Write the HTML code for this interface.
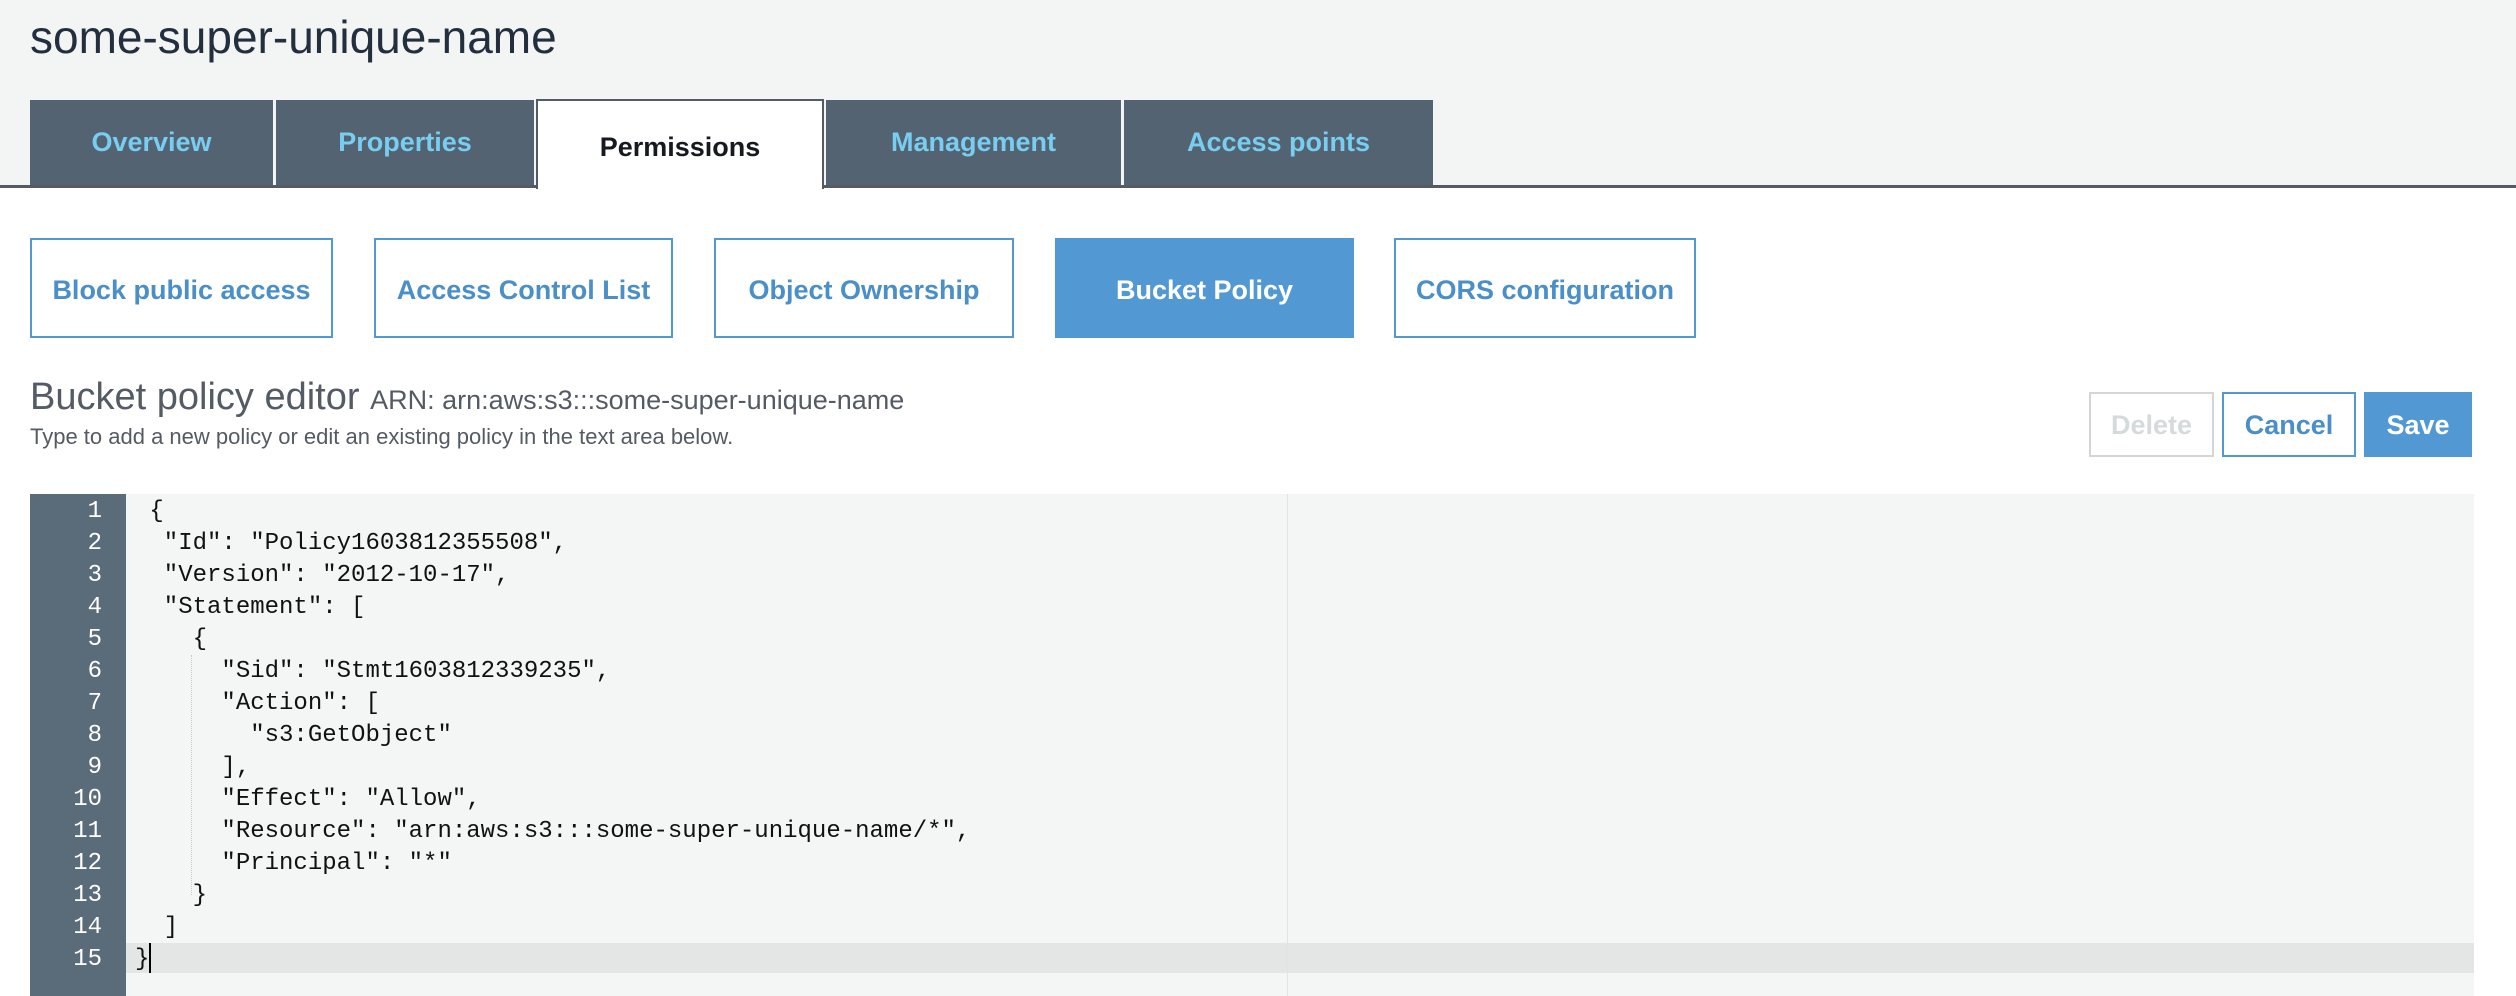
<!DOCTYPE html>
<html><head><meta charset="utf-8"><style>
*{margin:0;padding:0;box-sizing:border-box}
body{width:2516px;height:996px;overflow:hidden;background:#fff;font-family:"Liberation Sans",Arial,sans-serif;position:relative}
.hdr{position:absolute;left:0;top:0;width:2516px;height:186px;background:#f3f4f4}
.line{position:absolute;left:0;top:185px;width:2516px;height:3px;background:#545b64}
.title{position:absolute;left:30px;top:10px;font-size:46px;color:#232f3e;line-height:54px}
.tab{position:absolute;top:100px;height:85px;background:#536372;color:#79cdf0;font-weight:bold;font-size:27px;display:flex;align-items:center;justify-content:center}
.tab.act{background:#fff;color:#16191f;top:99px;height:90px;border:2px solid #545b64;border-bottom:none;padding-top:4px}
.sb{position:absolute;top:238px;height:100px;border:2px solid #5299d3;color:#4a8fc8;font-weight:bold;font-size:27px;display:flex;align-items:center;justify-content:center;background:#fff;padding-top:4px}
.sb.act{background:#5299d3;color:#fff}
.h2{position:absolute;left:30px;top:376px;font-size:38px;color:#545b64;white-space:nowrap}
.h2 span{font-size:27px}
.sub{position:absolute;left:30px;top:424px;font-size:22px;color:#545b64}
.btn{position:absolute;top:392px;height:65px;border:2px solid #5299d3;color:#4a8fc8;font-weight:bold;font-size:27px;display:flex;align-items:center;justify-content:center;padding-top:2px}
.ed{position:absolute;left:126px;top:494px;width:2348px;height:502px;background:#f4f5f5}
.gut{position:absolute;left:30px;top:494px;width:96px;height:502px;background:#5a6b7a}
.ln{position:absolute;left:30px;width:72px;text-align:right;color:#fff;font-family:"Liberation Mono",monospace;font-size:24px;line-height:32px}
.cd{position:absolute;left:135px;font-family:"Liberation Mono",monospace;font-size:24px;line-height:32px;color:#111;white-space:pre}
</style></head><body>
<div class="hdr"></div>
<div class="title">some-super-unique-name</div>
<div class="line"></div>
<div class="tab" style="left:30px;width:243px">Overview</div>
<div class="tab" style="left:276px;width:258px">Properties</div>
<div class="tab act" style="left:536px;width:288px">Permissions</div>
<div class="tab" style="left:826px;width:295px">Management</div>
<div class="tab" style="left:1124px;width:309px">Access points</div>

<div class="sb" style="left:30px;width:303px">Block public access</div>
<div class="sb" style="left:374px;width:299px">Access Control List</div>
<div class="sb" style="left:714px;width:300px">Object Ownership</div>
<div class="sb act" style="left:1055px;width:299px">Bucket Policy</div>
<div class="sb" style="left:1394px;width:302px">CORS configuration</div>

<div class="h2">Bucket policy editor <span>ARN: arn:aws:s3:::some-super-unique-name</span></div>
<div class="sub">Type to add a new policy or edit an existing policy in the text area below.</div>

<div class="btn" style="left:2089px;width:125px;border-color:#d5d5d5;color:#d5dbdb">Delete</div>
<div class="btn" style="left:2222px;width:134px">Cancel</div>
<div class="btn" style="left:2364px;width:108px;background:#5299d3;color:#fff">Save</div>

<div class="ed"></div>
<div style="position:absolute;left:126px;top:943px;width:2348px;height:30px;background:#e4e6e6"></div>
<div style="position:absolute;left:1287px;top:494px;width:1px;height:502px;background:#e2e4e4"></div>
<div style="position:absolute;left:191px;top:655px;width:0;height:240px;border-left:1px dotted #c8c8c8"></div>
<div class="gut"></div>
<div class="ln" style="top:496px">1<br>2<br>3<br>4<br>5<br>6<br>7<br>8<br>9<br>10<br>11<br>12<br>13<br>14<br>15</div>
<div class="cd" style="top:496px"> {
  "Id": "Policy1603812355508",
  "Version": "2012-10-17",
  "Statement": [
    {
      "Sid": "Stmt1603812339235",
      "Action": [
        "s3:GetObject"
      ],
      "Effect": "Allow",
      "Resource": "arn:aws:s3:::some-super-unique-name/*",
      "Principal": "*"
    }
  ]
}</div>
<div style="position:absolute;left:149px;top:943px;width:2px;height:30px;background:#000"></div>
</body></html>
